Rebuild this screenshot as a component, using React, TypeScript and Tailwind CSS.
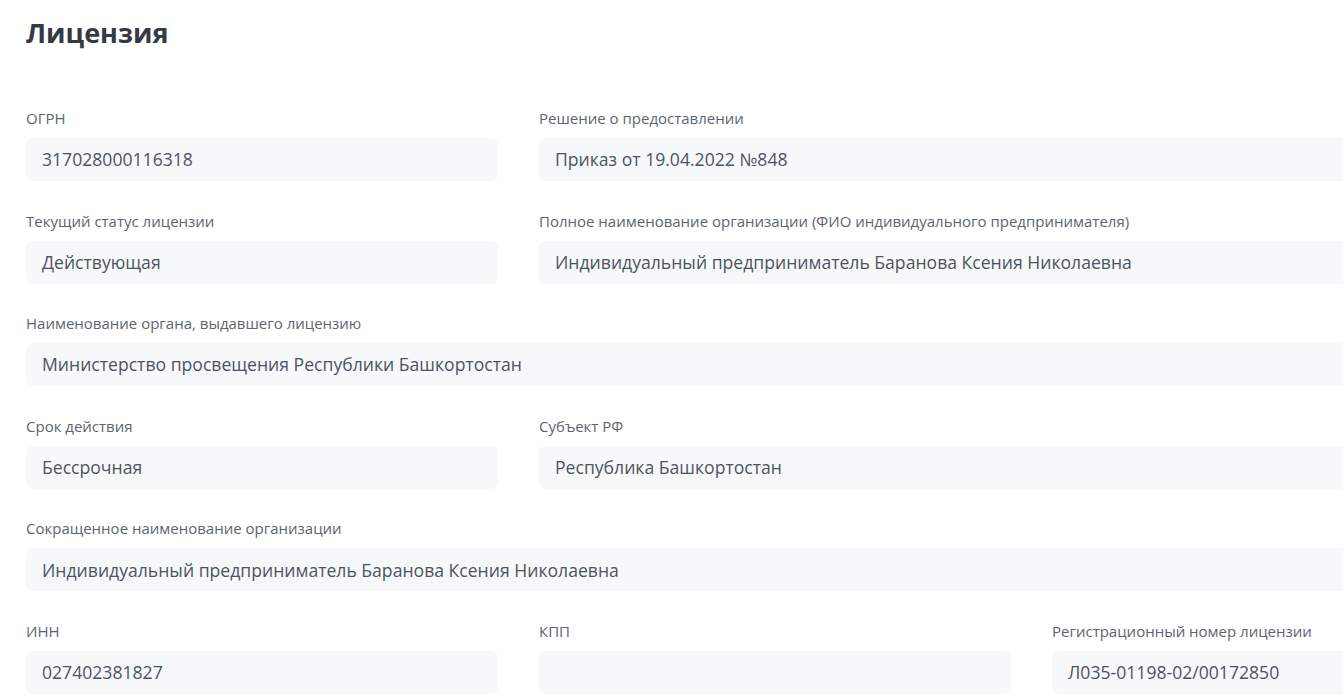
import React from 'react';

type Field = {
  label: string;
  value: string;
  span: 1 | 2 | 3;
};

const rows: Field[][] = [
  [
    { label: 'ОГРН', value: '317028000116318', span: 1 },
    { label: 'Решение о предоставлении', value: 'Приказ от 19.04.2022 №848', span: 2 },
  ],
  [
    { label: 'Текущий статус лицензии', value: 'Действующая', span: 1 },
    {
      label: 'Полное наименование организации (ФИО индивидуального предпринимателя)',
      value: 'Индивидуальный предприниматель Баранова Ксения Николаевна',
      span: 2,
    },
  ],
  [
    { label: 'Наименование органа, выдавшего лицензию', value: 'Министерство просвещения Республики Башкортостан', span: 3 },
  ],
  [
    { label: 'Срок действия', value: 'Бессрочная', span: 1 },
    { label: 'Субъект РФ', value: 'Республика Башкортостан', span: 2 },
  ],
  [
    { label: 'Сокращенное наименование организации', value: 'Индивидуальный предприниматель Баранова Ксения Николаевна', span: 3 },
  ],
  [
    { label: 'ИНН', value: '027402381827', span: 1 },
    { label: 'КПП', value: '', span: 1 },
    { label: 'Регистрационный номер лицензии', value: 'Л035-01198-02/00172850', span: 1 },
  ],
];

const spanClass = {
  1: 'col-span-1',
  2: 'col-span-2',
  3: 'col-span-3',
};

const FieldBox = ({ field }: { field: Field }) => (
  <div className={`${spanClass[field.span]} flex flex-col`}>
    <span className="text-[15px] leading-[20px] text-[#5d6470]">{field.label}</span>
    <div className="mt-[10px] h-[43px] rounded-[7px] bg-[#f7f8fa] px-4 flex items-center text-[17.6px] text-[#4d5461]">
      {field.value}
    </div>
  </div>
);

export default function App() {
  return (
    <div className="w-screen h-screen overflow-hidden bg-white" style={{ fontFamily: '"Open Sans", "Noto Sans", sans-serif' }}>
      <div className="w-[1550px] pl-[26px] pr-[26px] pt-[15px]">
        <h1 className="text-[27px] leading-[36px] font-bold text-[#343a44]">Лицензия</h1>
        <div className="mt-[57px] grid grid-cols-3 gap-x-[41px] gap-y-[29.6px]">
          {rows.flat().map((f, i) => (
            <FieldBox key={i} field={f} />
          ))}
        </div>
      </div>
    </div>
  );
}
